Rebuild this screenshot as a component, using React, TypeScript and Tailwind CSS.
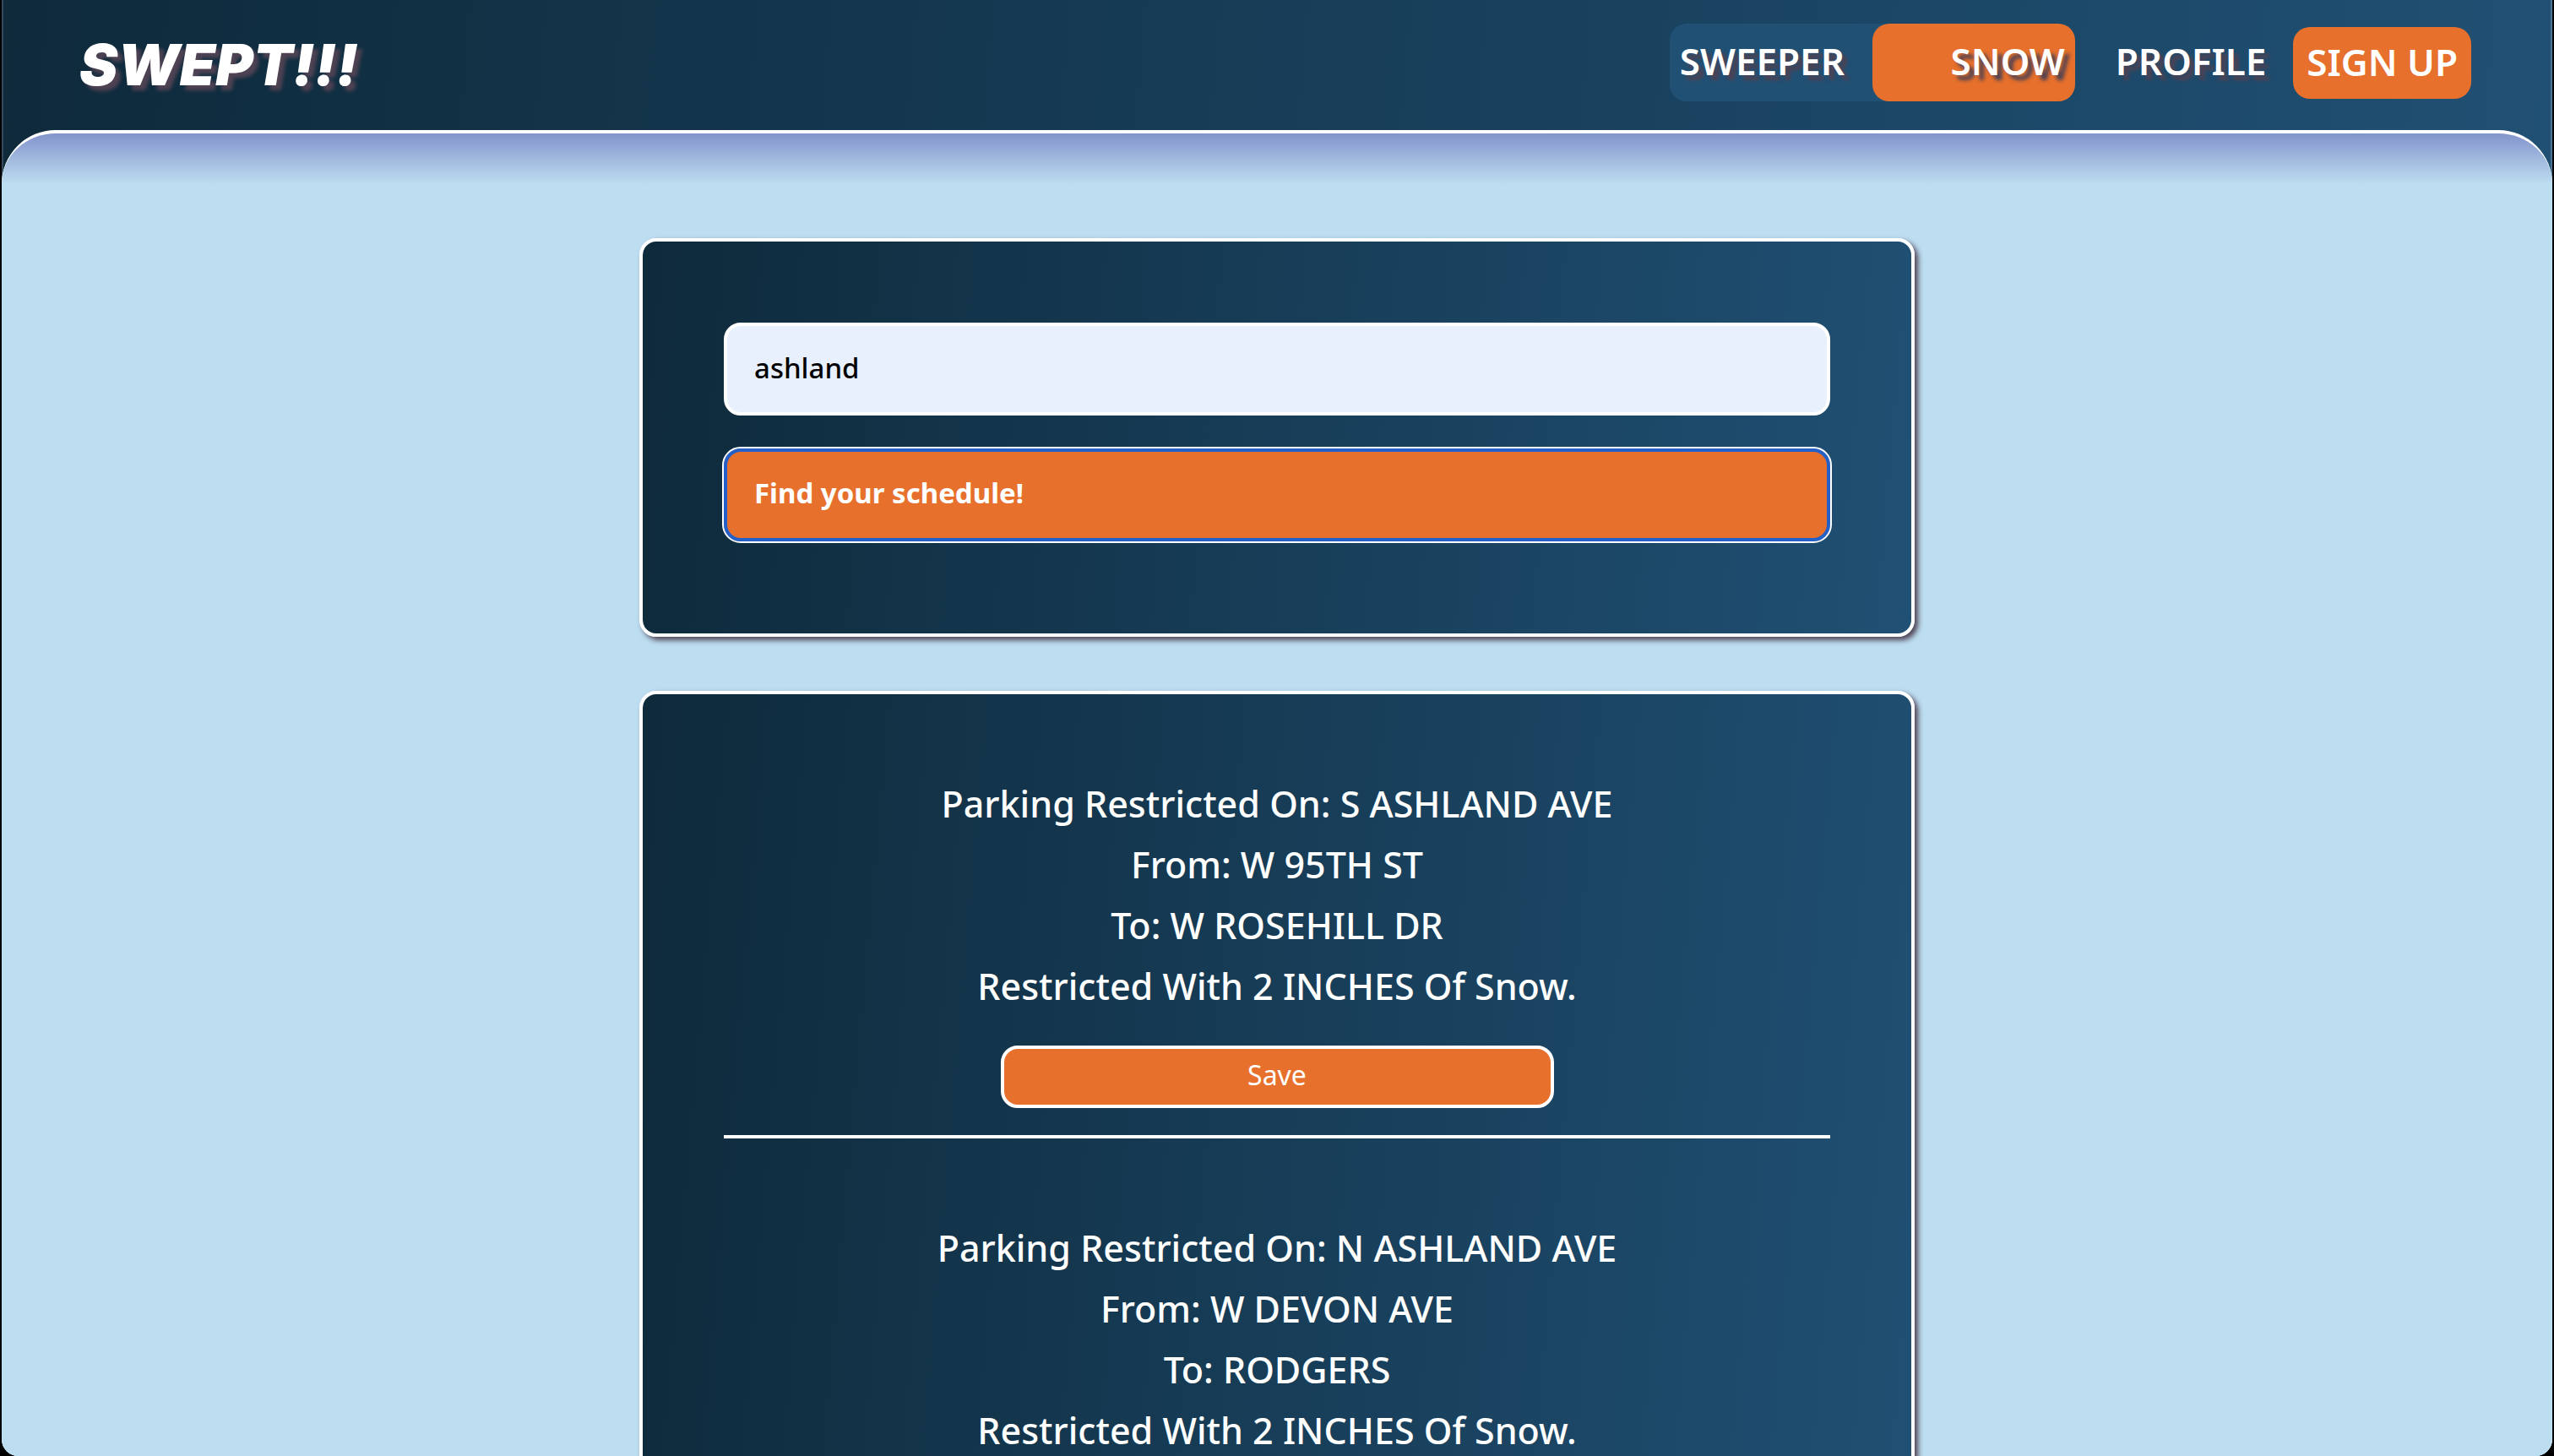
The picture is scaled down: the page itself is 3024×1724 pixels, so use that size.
type Restriction = {
  street: string;
  from: string;
  to: string;
  inches: number;
};

const restrictions: Restriction[] = [
  { street: "S ASHLAND AVE", from: "W 95TH ST", to: "W ROSEHILL DR", inches: 2 },
  { street: "N ASHLAND AVE", from: "W DEVON AVE", to: "RODGERS", inches: 2 },
];

const navText = "text-[44px] leading-[60px] font-semibold text-white";
const navShadow = "[text-shadow:6px_6px_4px_#4e4253]";
const card =
  "w-1/2 rounded-[20px] border-4 border-white bg-[linear-gradient(95deg,#0e2a3b,#205074)] px-24 shadow-[4px_4px_6px_#4e4253]";

function Header() {
  return (
    <header className="flex items-start justify-between border-x-2 border-l-[#34495a] border-r-[#4a7391] bg-[linear-gradient(95deg,#0e2a3b,#205074)] pr-[94px] pb-[98px] pl-[90px]">
      <a
        href="#home"
        className="pt-[34px] font-['Inter',sans-serif] text-[68px] leading-[84px] font-black text-white italic [text-shadow:6px_6px_4px_#4e4253]"
      >
        SWEPT!!!
      </a>
      <nav className="flex items-center pt-7">
        <div className="flex rounded-[20px] bg-[#205074]">
          <button type="button" className={`w-60 px-3 pt-3.5 pb-[18px] text-left ${navText} ${navShadow}`}>
            SWEEPER
          </button>
          <button
            type="button"
            aria-pressed="true"
            className={`w-60 rounded-[20px] bg-[#e6702c] px-3 pt-3.5 pb-[18px] text-right ${navText} ${navShadow}`}
          >
            SNOW
          </button>
        </div>
        <a href="#profile" className={`ml-12 pb-1 ${navText} ${navShadow}`}>
          PROFILE
        </a>
        <a
          href="#signup"
          className={`ml-8 rounded-[20px] bg-[#e6702c] px-4 pt-[11px] pb-3.5 ${navText}`}
        >
          SIGN UP
        </a>
      </nav>
    </header>
  );
}

function SearchCard() {
  return (
    <form className={`${card} flex flex-col gap-[39px] pt-24 pb-[109px]`} onSubmit={(e) => e.preventDefault()}>
      <input
        type="text"
        aria-label="Street name"
        defaultValue="ashland"
        className="h-[110px] w-full rounded-[20px] border-4 border-white bg-[#e8f0fe] px-8 pb-1 text-[33px] font-medium text-black"
      />
      <button
        type="submit"
        className="h-[110px] w-full rounded-[20px] border-4 border-[#2560c9] bg-[#e6702c] px-8 pb-1 text-left text-[33px] font-bold text-white outline-2 outline-white"
      >
        Find your schedule!
      </button>
    </form>
  );
}

function Results() {
  return (
    <ul className={`${card} flex flex-col gap-[94px] pt-[94px] pb-24`}>
      {restrictions.map((r) => (
        <li
          key={r.street}
          className="flex flex-col items-center border-b-4 border-white pb-8 text-center text-[43px] leading-[72px] font-medium text-white"
        >
          <p>Parking Restricted On: {r.street}</p>
          <p>From: {r.from}</p>
          <p>To: {r.to}</p>
          <p>Restricted With {r.inches} INCHES Of Snow.</p>
          <button
            type="button"
            className="mt-[34px] h-[74px] w-1/2 rounded-[20px] border-4 border-white bg-[#e6702c] pb-1 text-[32px] leading-[56px] font-normal"
          >
            Save
          </button>
        </li>
      ))}
    </ul>
  );
}

export default function App() {
  return (
    <div className="h-screen overflow-hidden bg-black px-0.5 font-['Noto_Sans',sans-serif]">
      <div className="h-full overflow-hidden rounded-b-[20px] bg-[#bdddf0]">
        <Header />
        <main className="-mt-16 flex flex-col items-center gap-16 rounded-t-[64px] border-t-4 border-white bg-[#bdddf0] bg-[linear-gradient(#8394cc,#bdddf0_60px)] pt-[124px]">
          <SearchCard />
          <Results />
        </main>
      </div>
    </div>
  );
}
